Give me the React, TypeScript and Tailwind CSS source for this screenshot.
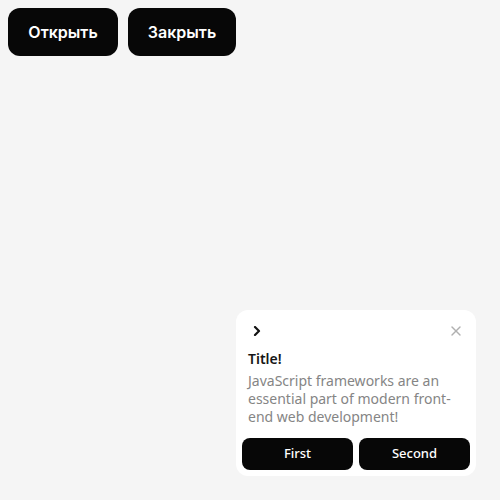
import { X } from "lucide-react";

export default function App() {
  return (
    <div className="min-h-[500px] w-full bg-[#f5f5f5] relative" style={{ fontFamily: "Inter, 'Noto Sans', sans-serif" }}>
      <div className="flex gap-[10px] p-2">
        <button className="h-12 w-[110px] rounded-xl bg-[#070707] text-white text-base font-semibold">
          Открыть
        </button>
        <button className="h-12 w-[108px] rounded-xl bg-[#070707] text-white text-base font-semibold">
          Закрыть
        </button>
      </div>

      {/* toast */}
      <div
        className="absolute right-6 bottom-6 w-[240px] rounded-xl bg-white p-[6px]"
        style={{ fontFamily: "'Noto Sans', 'DejaVu Sans', sans-serif" }}
      >
        <div className="flex items-center justify-between pl-[10px] pr-[6px] h-[28px] mt-[1px]">
          <svg width="10" height="10" viewBox="0 0 10 10" fill="none">
            <path d="M3 1 L7 5 L3 9" stroke="#111" strokeWidth="2.2" strokeLinecap="round" strokeLinejoin="round" />
          </svg>
          <X size={16} strokeWidth={2} className="text-[#b0b0b0]" />
        </div>
        <div className="px-[6px] pt-[5px]">
          <div className="text-[14px] leading-[18px] font-semibold text-[#161616]">Title!</div>
          <p className="mt-[4px] text-[14px] leading-[18px] text-[#858585]">
            JavaScript frameworks are an essential part of modern front-end web development!
          </p>
        </div>
        <div className="mt-[12px] flex gap-[6px]">
          <button className="h-8 flex-1 rounded-lg bg-[#070707] text-white text-[13px] font-medium">
            First
          </button>
          <button className="h-8 flex-1 rounded-lg bg-[#070707] text-white text-[13px] font-medium">
            Second
          </button>
        </div>
      </div>
    </div>
  );
}
